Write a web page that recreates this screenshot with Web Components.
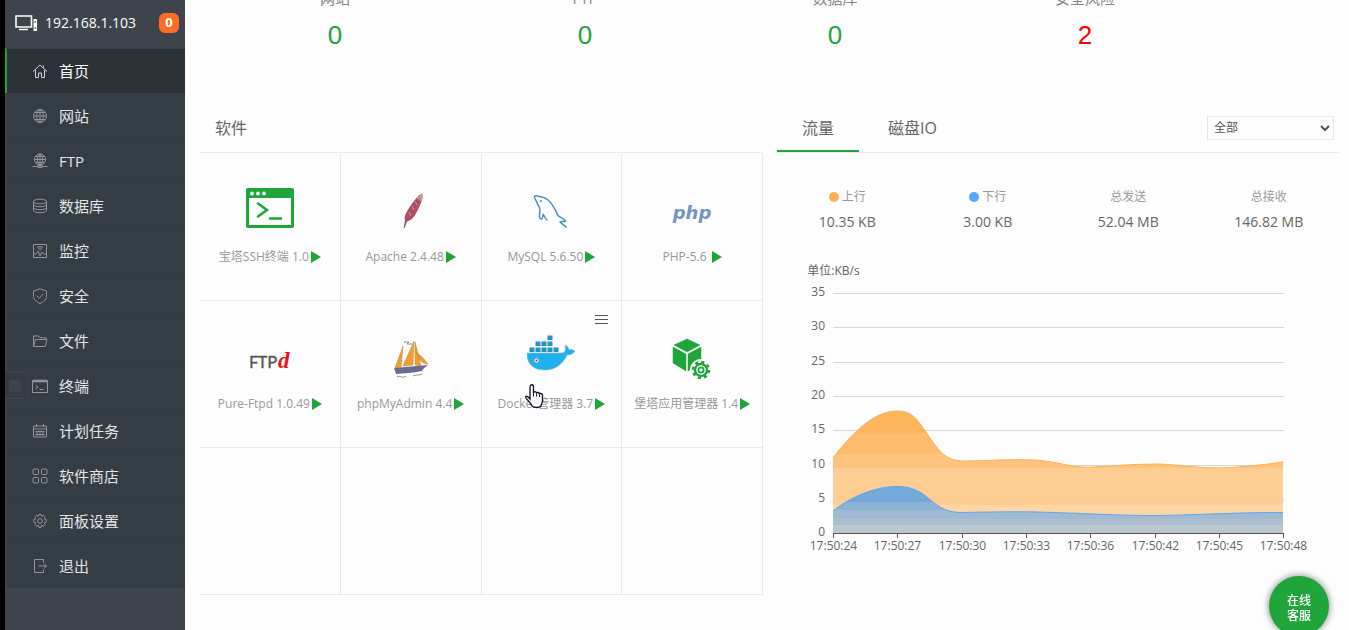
<!DOCTYPE html>
<html lang="zh-CN">
<head>
<meta charset="utf-8">
<title>面板首页</title>
<style>
html,body{margin:0;height:100%}
body{font-family:"Open Sans","Noto Sans CJK SC",sans-serif;font-size:12px;color:#666;background:#fdfdfd;overflow:hidden}
</style>
</head>
<body>
<panel-app></panel-app>
<script>
const define=(name,html,setup)=>{
  const t=document.createElement('template');
  t.innerHTML=html;
  customElements.define(name,class extends HTMLElement{
    constructor(){super();this.attachShadow({mode:'open'}).append(t.content.cloneNode(true));}
    connectedCallback(){if(setup)setup(this,this.shadowRoot);}
  });
};

const NAV={
 home:'<path d="M1 8.500 8 2l7 6.500M3.500 7v7.500H6.500V10h3v4.500h3V7M11.500 2.500v2"/>',
 globe:'<circle cx="8" cy="8" r="6.500"/><ellipse cx="8" cy="8" rx="3.200" ry="6.500"/><path d="M8 1.500v13M1.500 8h13M2.500 4.500h11M2.500 11.500h11"/>',
 ftp:'<circle cx="8" cy="6.500" r="5.500"/><ellipse cx="8" cy="6.500" rx="2.600" ry="5.500"/><path d="M8 1v13M2.500 6.500h11M3.500 3.500h9M3.500 9.500h9M.5 13.500h5.500M10 13.500h5.500M6 12.500h4v2H6z"/>',
 db:'<ellipse cx="8" cy="3.500" rx="6.500" ry="2.300"/><path d="M1.500 3.500v9c0 3 13 3 13 0v-9M1.500 6.500c0 3 13 3 13 0M1.500 9.500c0 3 13 3 13 0"/>',
 monitor:'<path d="M1.500 1.500h13v13h-13zM5 4h6M6 6h4M2 11h2l2-3 2 5 2-4 1.500 2H14"/>',
 shield:'<path d="M8 .8 14.500 3v5.500c0 3.500-3.500 5.500-6.500 7C5 14 1.500 12 1.500 8.500V3zM4.800 7.800l2.400 2.400 4.300-4.400"/>',
 folder:'<path d="M1.500 13V3h5l1.500 1.800h6v2M1.500 13.500l2-7H15l-1.800 7z"/>',
 term:'<path d="M.5 2.500h15v12H.5z"/><path d="M.5 3h15" stroke-width="2.500"/><path d="M3.500 7 6 9l-2.500 2M7.500 11.500h4"/>',
 cal:'<path d="M1.500 3h13v11h-13zM1.500 6h13M4.500 1v3M11.500 1v3M3.500 8.500h9M3.500 11.500h9" /><path d="M5 8v5M8 8v5M11 8v5"/>',
 apps:'<rect x="1" y="1" width="5.500" height="5.500" rx="1"/><rect x="9.500" y="1" width="5.500" height="5.500" rx="1"/><rect x="1" y="9.500" width="5.500" height="5.500" rx="1"/><rect x="9.500" y="9.500" width="5.500" height="5.500" rx="1"/>',
 gear:'<path d="M6.800 1.500h2.400l.5 1.800 1.800-.9 1.700 1.700-.9 1.800 2 .6v2.600l-2 .6.9 1.800-1.700 1.700-1.800-.9-.5 2H6.800l-.5-2-1.800.9-1.700-1.700.9-1.800-2-.6V6.500l2-.6-.9-1.800 1.700-1.700 1.800.9z"/><circle cx="8" cy="8" r="2.300"/>',
 exit:'<path d="M11.500 4.500v-3h-9v13h9v-3M6.500 8h8M12 5.500 14.500 8 12 10.500"/>'
};

const LOGO={
 ssh:'<rect y="4" width="48" height="40" rx="2" fill="#20a53a"/><path d="M3 14h42v27H3z" fill="#fdfdfd"/><g fill="#fff"><circle cx="6" cy="9.500" r="1.900"/><circle cx="12" cy="9.500" r="1.900"/><circle cx="18" cy="9.500" r="1.900"/></g><path d="m12 19.500 9 6.500-9 6.500M24 34.500h11" fill="none" stroke="#20a53a" stroke-width="2.500" stroke-linecap="round"/>',
 apache:'<path d="M35 9.500c2 4-2 12-5 18-3 6-6 9-10 10-1 3-2 5-3 7 0-3 .5-6 1-8-1-4 1-8 5-14s8-11 12-13z" fill="#b54a66"/><path d="M35 9.500c1.500 2 .8 5-.5 8l-5-3c2-2 4-4 5.500-5z" fill="#b9a48c"/><path d="M33 14C27 21 21 31 17 44" stroke="#7d6878" fill="none"/><path d="m28 17 2 4m-5 1 2 4m-5 2 2 4" stroke="#d99a73"/>',
 mysql:'<path d="M20.300 36.500C18.500 35 17.500 33 16.300 30.300 15.500 32 16 34.500 14.500 35 12.500 35 12.300 33 12.500 30.500 13 28 13.500 26 12.500 23.500 10.500 20.500 9.500 17 7.500 13.500 7 11.500 9 11.200 11 12.200 14 12.600 18 13.500 21 16 26 20 28.500 26 31 31.700 33.500 33.500 36.500 34.500 38.600 37 37 37.800 35 37.200 33 37.700 34.500 40.500 38 41 39.700 43.700" fill="none" stroke="#4b91b5" stroke-width="1.500" stroke-linejoin="round"/><circle cx="14" cy="17" r="1" fill="#567f92"/>',
 php:'<text x="24" y="35" text-anchor="middle" font-family="DejaVu Sans" font-size="18" font-weight="bold" font-style="italic" fill="#7494c4">php</text>',
 ftpd:'<text x="3" y="37" font-family="Open Sans" font-size="17" fill="#555" stroke="#555" stroke-width=".5">FTP</text><text x="32" y="37" font-family="Liberation Serif" font-size="23" font-weight="bold" font-style="italic" fill="#e8141c">d</text>',
 pma:'<g transform="translate(0 5)"><g fill="#f0a02d" stroke="#b48443" stroke-width=".5"><path d="m16 10-8 22 6-1zM27 5 16 30l10-1zM28 6l6 24-6-1zM29 17c4 1 8 6 12 11-5 0-8-3-12-11z"/></g><path d="m7 32 34-3c-2 2-5 3-6 6-9 2-18 2-26 3z" fill="#6c6b92"/><path d="M17 6h5l-2 2h5M10 41c4-2 5 2 9-1M26 40c4-2 5 0 9-2" fill="none" stroke="#8a8a96"/></g>',
 docker:'<g transform="translate(0 1)"><path d="M0 21h35c3 0 4-3 3-8 3 1 4 4 4 5 2-1 4 0 6 1-2 3-5 4-8 4-4 9-12 15-22 15C6 38 0 32 0 21z" fill="#1eb1ee" stroke="#7cb7d0" stroke-width=".7"/><path d="M2.500 15.500H7.500V20h-5zm6 0h5V20h-5zm6 0h5V20h-5zm6 0h5V20h-5zm6 0h5V20h-5zm-18-6h5V14h-5zm6 0h5V14h-5zm6 0h5V14h-5zm0-6h5V8h-5z" fill="#2396c0"/><circle cx="9.500" cy="28.500" r="2.500" fill="#fff" stroke="#6ba3bb"/><circle cx="9.500" cy="28.500" r="1" fill="#345"/></g>',
 app:'<g transform="translate(-1 1)"><path d="m20 7 13 6-13 7-13-7zM6 15l13 7v17L6 31zm28 0-13 7v17l13-8z" fill="#20a53a" stroke="#20a53a" stroke-width=".5"/><circle cx="34" cy="38" r="11" fill="#fdfdfd"/><circle cx="34" cy="38" r="8" fill="none" stroke="#20a53a" stroke-width="2.500" stroke-dasharray="3.140"/><circle cx="34" cy="38" r="6" fill="none" stroke="#20a53a" stroke-width="2.400"/><circle cx="34" cy="38" r="2.600" fill="none" stroke="#20a53a" stroke-width="1.800"/></g>'
};

define('nav-item',`<style>
:host{display:block;border-top:1px solid #343b42;border-left:2px solid #414141;background:#353d44;color:#e2e4e6;--ic:#92969a}
:host([active]){background:#2c3138;border-left-color:#20a53a;border-top-color:#3a4148;color:#fff;--ic:#d0d2d4}
a{display:flex;align-items:center;gap:11px;height:44px;box-sizing:border-box;padding:0 0 1px 25px;font-size:15px;line-height:20px;color:inherit;text-decoration:none}
svg{width:16px;height:16px;fill:none;stroke:var(--ic)}
</style><a href="#"><svg viewBox="0 0 16 16" aria-hidden="true"></svg><slot></slot></a>`,
(h,r)=>{r.querySelector('svg').innerHTML=NAV[h.getAttribute('icon')];});

define('side-bar',`<style>
:host{display:block;position:relative;width:180px;border-left:5px solid #000;background:#3d444b;color:#fff}
header{display:flex;align-items:center;height:48px;padding:0 6px 0 10px;box-sizing:border-box;font-size:14px}
header svg{width:22px;height:16px;margin-right:8px}
header span{flex:1;line-height:20px;padding-bottom:2px}
b{width:20px;height:20px;line-height:18px;margin-bottom:2px;border-radius:6px;background:#fc6d26;text-align:center;font-size:13px}
.pc{padding-bottom:2px;display:flex}
.toggle{position:absolute;left:0;top:372px;width:23px;height:27px;padding:7px 8px 7px 4px;border:1px solid #3d444b;border-left:0;border-radius:0 0 4px 0;background:#343b42;box-sizing:border-box}
.toggle i{display:block;width:12px;height:12px;border-radius:2px;background:#3d444b}
</style>
<header><div class="pc"><svg viewBox="0 0 22 16" aria-hidden="true"><path d="M1 1h15.500v11H1zM4 14.500h9" fill="none" stroke="#fff" stroke-width="1.600"/><path d="M18.500 4h3.500v12h-3.500z" fill="#fff"/><path d="M20.200 6v2M20.200 12v2" stroke="#3d444b"/></svg></div><span>192.168.1.103</span><b>0</b></header>
<nav>
<nav-item icon="home" active>首页</nav-item><nav-item icon="globe">网站</nav-item><nav-item icon="ftp">FTP</nav-item><nav-item icon="db">数据库</nav-item><nav-item icon="monitor">监控</nav-item><nav-item icon="shield">安全</nav-item><nav-item icon="folder">文件</nav-item><nav-item icon="term">终端</nav-item><nav-item icon="cal">计划任务</nav-item><nav-item icon="apps">软件商店</nav-item><nav-item icon="gear">面板设置</nav-item><nav-item icon="exit">退出</nav-item>
</nav>
<button class="toggle" type="button" aria-label="收起"><i></i></button>`);

define('count-item',`<style>
:host{display:flex;flex-direction:column;align-items:center;color:#20a53a}
:host([alert]){color:#f00}
span{font-size:15px;line-height:20px;color:#888}
a{margin-top:11px;font:26px/32px "Liberation Sans",sans-serif;color:inherit;text-decoration:none}
</style><span><slot></slot></span><a href="#"></a>`,
(h,r)=>{r.querySelector('a').textContent=h.getAttribute('value');});

define('soft-item',`<style>
:host{display:block;position:relative;height:146px;border-right:1px solid #e8e8f4;border-bottom:1px solid #e8e8f4}
a{display:flex;flex-direction:column;align-items:center;padding-top:30px;color:#999;text-decoration:none}
svg{width:48px;height:48px;flex:none}
p{display:flex;align-items:center;gap:2px;margin:15px 0 0;line-height:20px;font-size:12px;white-space:nowrap}
i{border:solid transparent;border-width:6px 0 6px 10px;border-left-color:#20a53a}
</style><a href="#"><svg viewBox="0 0 48 48" aria-hidden="true"></svg><p><slot></slot><i></i></p></a><slot name="over"></slot>`,
(h,r)=>{const l=LOGO[h.getAttribute('logo')];if(l)r.querySelector('svg').innerHTML=l;else r.querySelector('a').remove();});

define('soft-panel',`<style>
:host{display:block}
h3{margin:0;padding:0 15px;height:49px;line-height:51px;font-size:16px;font-weight:400;color:#666;border-bottom:1px solid #ebebeb}
.grid{display:grid;grid-template-columns:repeat(4,1fr);padding-top:1px}
.more{position:absolute;right:11px;top:12px;width:15px;height:12px;padding:0;border:0;background:none;display:flex;flex-direction:column;justify-content:space-around}
.more i{width:13px;height:1px;background:#555}
.cursor{position:absolute;left:42px;top:83px;width:20px;height:25px}
</style><h3>软件</h3><div class="grid">
<soft-item logo="ssh">宝塔SSH终端 1.0</soft-item><soft-item logo="apache">Apache 2.4.48</soft-item><soft-item logo="mysql">MySQL 5.6.50</soft-item><soft-item logo="php">PHP-5.6&nbsp;</soft-item>
<soft-item logo="ftpd">Pure-Ftpd 1.0.49</soft-item><soft-item logo="pma">phpMyAdmin 4.4</soft-item><soft-item logo="docker">Docker管理器 3.7<button slot="over" class="more" type="button" aria-label="菜单"><i></i><i></i><i></i></button><svg slot="over" class="cursor" viewBox="0 0 20 25" aria-hidden="true"><path d="M6 15V3c0-3 3.500-3 3.500 0v6c0-2 3-2 3 .5 0-1.500 3-1.500 3 1 0-1.500 3-1.500 3 1V17c0 2-1.500 3-1.500 5-2 2-7 2-9 0-1-3-4-5-6-8-1-2 1-3 4 1z" fill="#fff" stroke="#112" stroke-width="1.300"/><path d="M9.500 8.500v4M12.500 9.500v3M15.500 10.500v2.500" stroke="#112"/></svg></soft-item><soft-item logo="app">堡塔应用管理器 1.4</soft-item>
<soft-item></soft-item><soft-item></soft-item><soft-item></soft-item><soft-item></soft-item></div>`);

define('traffic-stat',`<style>
:host{display:flex;flex-direction:column;align-items:center}
span{display:flex;align-items:center;gap:3px;line-height:20px;font-size:12px;color:#999}
i{width:10px;height:10px;border-radius:50%;background:var(--dot)}
i[hidden]{display:none}
b{margin-top:5px;font-weight:400;font-size:14px;line-height:20px;color:#666}
</style><span><i hidden></i><slot></slot></span><b></b>`,
(h,r)=>{r.querySelector('b').textContent=h.getAttribute('value');const d=h.getAttribute('dot');if(d){h.style.setProperty('--dot',d);r.querySelector('i').hidden=false;}});

/* Area chart: values in KB/s against sample times */
define('traffic-chart',`<style>
:host{display:block}
svg{display:block;width:100%;height:auto}
text{font-size:12px;fill:#666}
</style><svg viewBox="0 0 562 310" role="img" aria-label="流量图"></svg>`,
(h,r)=>{
 const bands=(id,c,y1,y2)=>{let s='';for(const a of c)s+=`<stop offset="${a[0]}" stop-color="${a[2]}"/><stop offset="${a[1]}" stop-color="${a[2]}"/>`;return `<linearGradient id="${id}" gradientUnits="userSpaceOnUse" x1="0" x2="0" y1="${y1}" y2="${y2}">${s}</linearGradient>`;};
 let s='<defs>'+bands('up',[[0,.18,'#ffb052'],[.18,.35,'#fcb763'],[.35,.47,'#fdc076'],[.47,.77,'#ffca8b'],[.77,1,'#ffd4a0']],156,278)
  +bands('dn',[[0,.34,'#6aa4d8'],[.34,.5,'#84add2'],[.5,.7,'#9ab6cf'],[.7,.82,'#a6bacd'],[.82,1,'#b5c4cc']],231,278)+'</defs>';
 for(let i=0;i<8;i++){
  const y=Math.round(38+i*34.3)+.5;
  if(i<7)s+=`<path d="M56 ${y}h451" stroke="#d6d6d6"/>`;
  s+=`<text x="48" y="${y+2.5}" text-anchor="end">${35-i*5}</text>`;
 }
 const up='M56 203C75 178 97 156 120 156C131 156 136 159 144 170C160 192 165 206 187 206C205 206 248 203 268 206C285 208 297 213 315 212C335 211 357 209 378 209C397 209 420 213 442 213C468 212 484 210 506 207';
 const dn='M56 256C75 241 99 231.500 120 231.500C131 231.500 138 234 146 239C160 250 166 257 183 257.500C205 257 240 256.500 260 257C300 258 350 261 382 260.500C420 260 455 257.500 506 257.500';
 s+=`<g opacity=".93"><path d="${up}V278H56Z" fill="url(#up)"/><path d="${dn}V278H56Z" fill="url(#dn)"/></g><path d="${up}" fill="none" stroke="#ffb052"/><path d="${dn}" fill="none" stroke="#5aa6f5"/><path d="M56 278.500h451" stroke="#555"/>`;
 ['24','27','30','33','36','42','45','48'].forEach((t,i)=>{const x=Math.round(56+i*64.3)+.5;s+=`<path d="M${x} 278v5" stroke="#555"/><text x="${x}" y="295" text-anchor="middle">17:50:${t}</text>`;});
 s+='<text x="56.500" y="20" text-anchor="middle">单位:KB/s</text>';
 r.querySelector('svg').innerHTML=s;
});

define('traffic-panel',`<style>
:host{display:block}
header{display:flex;align-items:center;height:49px;padding-right:5px;border-bottom:1px solid #ebebeb}
button{height:49px;margin-right:5px;padding:4px 24px 0;border:0;border-bottom:2px solid transparent;background:none;font:16px/43px "Open Sans","Noto Sans CJK SC",sans-serif;color:#666}
button.on{border-color:#20a53a;padding:4px 25px 0}
select{margin-left:auto;width:127px;height:24px;padding:0 2px;border:1px solid #e6e6e6;border-radius:0;background:#fdfdfd;font:12px "Open Sans","Noto Sans CJK SC",sans-serif;color:#555}
.row{display:grid;grid-template-columns:repeat(4,1fr);padding:34px 0 23px}
</style><header role="tablist"><button class="on" role="tab" type="button" aria-selected="true">流量</button><button role="tab" type="button">磁盘IO</button><select aria-label="网卡"><option>全部</option></select></header>
<div class="row"><traffic-stat dot="#ffb052" value="10.35 KB">上行</traffic-stat><traffic-stat dot="#55a7fb" value="3.00 KB">下行</traffic-stat><traffic-stat value="52.04 MB">总发送</traffic-stat><traffic-stat value="146.82 MB">总接收</traffic-stat></div>
<traffic-chart></traffic-chart>`);

define('support-button',`<style>
:host{position:fixed;right:20px;bottom:-6px}
button{display:block;width:60px;height:60px;padding:2px 16px 0;border:0;border-radius:50%;background:#20a53a;box-shadow:0 0 6px 1px #999;color:#fff;font:500 12px/15px "Noto Sans CJK SC",sans-serif}
</style><button type="button"><slot></slot></button>`);

define('panel-app',`<style>
:host{display:flex;height:100vh;overflow:hidden}
side-bar{flex:none}
main{flex:1;min-width:0;padding:0 10px 0 15px}
.counts{display:grid;grid-template-columns:repeat(4,minmax(0,250px));margin-top:-12px;padding:0 10px 52px}
.cols{display:grid;grid-template-columns:minmax(0,563fr) minmax(0,562fr);gap:14px}
</style><side-bar></side-bar><main>
<section class="counts"><count-item value="0">网站</count-item><count-item value="0">FTP</count-item><count-item value="0">数据库</count-item><count-item value="2" alert>安全风险</count-item></section>
<div class="cols"><soft-panel></soft-panel><traffic-panel></traffic-panel></div></main>
<support-button>在线客服</support-button>`);
</script>
</body>
</html>
